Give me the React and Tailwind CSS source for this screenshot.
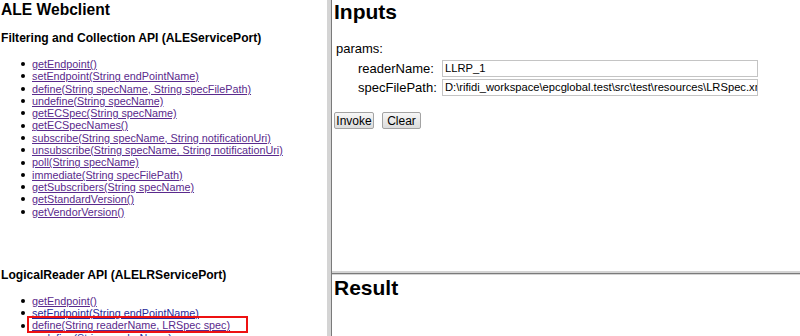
import React from 'react';

const aleOps = [
  'getEndpoint()',
  'setEndpoint(String endPointName)',
  'define(String specName, String specFilePath)',
  'undefine(String specName)',
  'getECSpec(String specName)',
  'getECSpecNames()',
  'subscribe(String specName, String notificationUri)',
  'unsubscribe(String specName, String notificationUri)',
  'poll(String specName)',
  'immediate(String specFilePath)',
  'getSubscribers(String specName)',
  'getStandardVersion()',
  'getVendorVersion()',
];

const lrOps = [
  { name: 'getEndpoint()' },
  { name: 'setEndpoint(String endPointName)', fresh: true },
  { name: 'define(String readerName, LRSpec spec)', marked: true },
  { name: 'undefine(String readerName)', fresh: true },
];

const OpItem = ({ name, fresh, marked }) => (
  <li className="flex items-center h-[12.3px]">
    <span className="w-[4px] h-[4px] rounded-full bg-black ml-[21px] mr-[7px] shrink-0"></span>
    <span className={marked ? 'relative inline-block' : 'inline-block'}>
      <a
        href="#"
        className={`underline ${fresh ? 'text-[#27279a]' : 'text-[#5a2a8c]'}`}
      >
        {name}
      </a>
      {marked && (
        <span className="absolute left-[-5px] top-[-3px] w-[221px] h-[17px] border-2 border-[#ee1111]"></span>
      )}
    </span>
  </li>
);

const Button = ({ children, w }) => (
  <button
    className={`h-[17px] ${w} text-[12px] leading-none text-black border border-[#a3a3a3] rounded-[2px] bg-gradient-to-b from-[#f7f7f7] to-[#dcdcdc]`}
  >
    {children}
  </button>
);

const App = () => {
  return (
    <div className="w-[800px] h-[336px] overflow-hidden bg-white flex font-['Liberation_Sans',Arial,sans-serif] text-black">
      {/* Left frame: operation index */}
      <div className="w-[327px] h-full overflow-hidden shrink-0">
        <h1 className="text-[15.6px] font-bold leading-[20px] pl-[1px]">ALE Webclient</h1>
        <h3 className="text-[12.1px] font-bold leading-[14px] pl-[1px] mt-[11px]">
          Filtering and Collection API (ALEServicePort)
        </h3>
        <ul className="mt-[13px] text-[10.8px] leading-[12.3px]">
          {aleOps.map((op) => (
            <OpItem key={op} name={op} />
          ))}
        </ul>
        <h3 className="text-[12.1px] font-bold leading-[14px] pl-[1px] mt-[50px]">
          LogicalReader API (ALELRServicePort)
        </h3>
        <ul className="mt-[13px] text-[10.8px] leading-[12.3px]">
          {lrOps.map((op) => (
            <OpItem key={op.name} {...op} />
          ))}
        </ul>
      </div>

      {/* Frame divider */}
      <div className="w-[4px] h-full bg-[#d4d4d4] shrink-0"></div>
      <div className="w-[1px] h-full bg-[#7a7a7a] shrink-0"></div>

      {/* Right frames */}
      <div className="flex-1 h-full flex flex-col overflow-hidden">
        <div className="h-[271px] pl-[2px] shrink-0">
          <h1 className="text-[21px] font-bold leading-[24px]">Inputs</h1>
          <div className="mt-[17px] pl-[2px] text-[13px] leading-[16px]">params:</div>
          <div className="mt-[3px] grid grid-cols-[108px_316px] gap-y-[2px] text-[13px] items-center">
            <div className="pl-[24px] leading-[17px] whitespace-nowrap">readerName:</div>
            <div className="h-[17px] border border-[#c4c4c4] bg-white pl-[2px] text-[11.2px] leading-[15px] overflow-hidden whitespace-nowrap">
              LLRP_1
            </div>
            <div className="pl-[24px] leading-[17px] whitespace-nowrap">specFilePath:</div>
            <div className="h-[17px] border border-[#c4c4c4] bg-white pl-[2px] text-[11.2px] leading-[15px] overflow-hidden whitespace-nowrap">
              D:\rifidi_workspace\epcglobal.test\src\test\resources\LRSpec.xml
            </div>
          </div>
          <div className="mt-[16px] flex gap-[8px]">
            <Button w="w-[40px]">Invoke</Button>
            <Button w="w-[39px]">Clear</Button>
          </div>
        </div>
        <div className="h-[2px] bg-[#d4d4d4] shrink-0"></div>
        <div className="h-[1px] bg-[#7a7a7a] shrink-0"></div>
        <div className="h-[1px] bg-[#d4d4d4] shrink-0"></div>
        <div className="flex-1 pl-[2px]">
          <h1 className="text-[21px] font-bold leading-[24px] mt-[1px]">Result</h1>
        </div>
      </div>
    </div>
  );
};

export default App;
